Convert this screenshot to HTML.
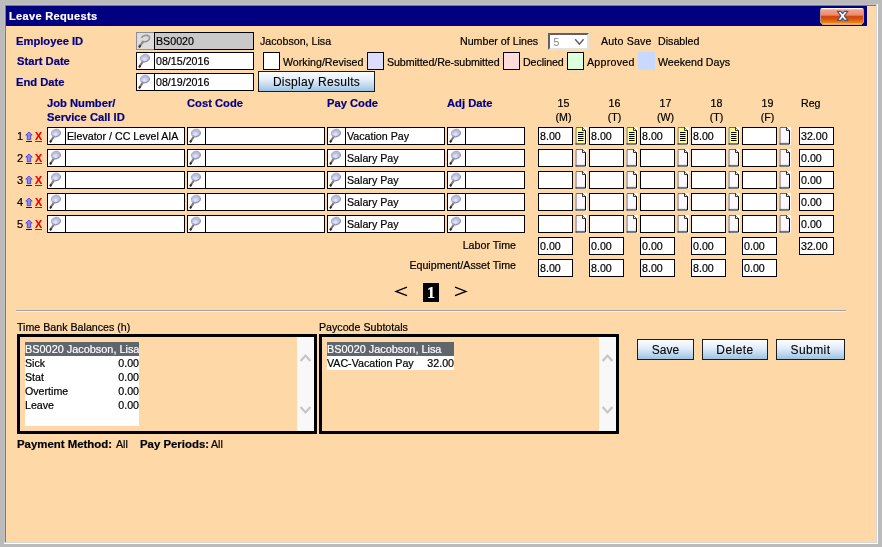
<!DOCTYPE html>
<html><head><meta charset="utf-8"><title>Leave Requests</title>
<style>

html,body{margin:0;padding:0;}
body{width:882px;height:547px;overflow:hidden;background:#bbbbbb;font-family:"Liberation Sans",sans-serif;font-size:10.67px;color:#000;position:relative;-webkit-text-stroke:0.2px;}
.nv,.b,b{font-size:11.2px}
.a{position:absolute;white-space:nowrap;line-height:14px;}
.b{font-weight:bold;}
.nv{color:#000080;font-weight:bold;}
.box{position:absolute;box-sizing:border-box;border:1px solid #000;background:#fff;height:18px;}
.txt{position:absolute;left:1px;top:1px;line-height:14px;white-space:nowrap;}
.grp .txt{left:19px;}
.grp .sep{position:absolute;left:17px;top:0;width:1px;height:16px;background:#000;}
.mag{position:absolute;left:0;top:0;width:17px;height:16px;}
.note{position:absolute;width:12px;height:18px;}
.btn{position:absolute;box-sizing:border-box;border:1px solid #1c1c1c;background:linear-gradient(#fbfdff 0%,#e4eefa 40%,#c2daf0 70%,#9cc3e6 100%);text-align:center;font-size:12px;color:#000;-webkit-text-stroke:0.1px;}
.lg{position:absolute;box-sizing:border-box;border:1px solid #000;width:17px;height:18px;top:52px;}
.lnk{position:absolute;white-space:nowrap;line-height:14px;font-weight:bold;text-decoration:underline;}
.c{position:absolute;white-space:nowrap;line-height:14px;text-align:center;width:51px;}
.lb{position:absolute;box-sizing:border-box;border:3px solid #000;height:100px;top:334px;}
.tb{position:absolute;background:#fff;}
.tb .h{position:absolute;left:0;top:0;height:14px;background:#61666c;color:#fff;overflow:hidden;font-size:10.9px;}
.tb div{position:absolute;left:0;white-space:nowrap;line-height:14px;height:14px;}
.sb{position:absolute;background:#f8f8f8;width:17px;}

</style></head><body><div id="wrap" style="position:absolute;left:0;top:0;width:882px;height:547px;will-change:transform">
<div style="position:absolute;left:4px;top:4px;width:874px;height:540px;background:#fff"></div>
<div style="position:absolute;left:4px;top:4px;width:873px;height:539px;background:#d8d8d8"></div>
<div style="position:absolute;left:4px;top:4px;width:872px;height:538px;background:#c2c2c2"></div>
<div style="position:absolute;left:5px;top:5px;width:871px;height:537px;background:#7c7c7c"></div>
<div style="position:absolute;left:6px;top:6px;width:870px;height:536px;background:#FFD8A8"></div>
<div style="position:absolute;left:6px;top:6px;width:861px;height:20px;background:#000080"></div>
<div class="a b" id="title" style="left:9px;top:9px;color:#fff;font-size:11px;letter-spacing:0.33px">Leave Requests</div>
<div style="position:absolute;left:820px;top:8px;width:44px;height:17px;overflow:hidden">
<svg width="44" height="17" viewBox="0 0 44 17" style="position:absolute;left:0;top:0"><defs><linearGradient id="cg" x1="0" y1="0" x2="0" y2="1"><stop offset="0" stop-color="#f6a994"/><stop offset="0.42" stop-color="#ee8a6c"/><stop offset="0.47" stop-color="#c9481c"/><stop offset="0.62" stop-color="#d94c0c"/><stop offset="0.85" stop-color="#ec7a10"/><stop offset="1" stop-color="#f09a28"/></linearGradient></defs>
<path d="M0.5 1.5 Q0.5 0.5 1.5 0.5 L42.5 0.5 Q43.5 0.5 43.5 1.5 L43.5 14.5 L41.5 16.5 L2.5 16.5 L0.5 14.5 Z" fill="url(#cg)" stroke="#b89890" stroke-width="1"/>
<path d="M1.5 0.7 H42.5" stroke="#ffffff" stroke-width="1.2"/><path d="M2.5 16 H41.5" stroke="#f2c46c" stroke-width="1"/>
<path d="M17.4 3.3 L20.9 3.3 L22.6 5.6 L24.3 3.3 L27.8 3.3 L24.4 7.8 L27.9 12.4 L24.3 12.4 L22.6 10.1 L20.9 12.4 L17.3 12.4 L20.8 7.8 Z" fill="#fbfbfb" stroke="#55556e" stroke-width="1.2" stroke-linejoin="round"/></svg></div>
<div class="a nv" style="left:16px;top:34px">Employee ID</div>
<div class="a nv" style="left:17px;top:54px">Start Date</div>
<div class="a nv" style="left:16px;top:75px">End Date</div>
<div style="position:absolute;left:136px;top:32px;width:18px;height:18px;box-sizing:border-box;border:1px solid #8a8e96;border-right:none;background:#dddddd"><svg class="mag" viewBox="0 0 17 16"><path d="M5.9 8.8 L2.6 13.4" stroke="#8c8c8c" stroke-width="2.3" stroke-linecap="round"/><path d="M3 12.9 L2.5 13.6" stroke="#3a3a3a" stroke-width="2.2" stroke-linecap="round"/><path d="M4.4 5 Q6.5 1.6 10.6 2.3 Q13.6 3.4 12.2 6.4 Q10.4 9.4 6 8.6" stroke="#8e8e8e" stroke-width="1.4" fill="none"/><path d="M6 3.4 Q8.6 1.8 12 3.6 M12.3 3 L12 6.2" stroke="#a4a4a4" stroke-width="0.9" fill="none"/></svg></div>
<div class="box" style="left:154px;top:32px;width:100px;background:#c9c9c9"><div class="txt" style="left:1px">BS0020</div></div>
<div class="box grp" style="left:136px;top:52px;width:118px;"><svg class="mag" viewBox="0 0 17 16"><defs><radialGradient id="lg" cx="42%" cy="62%" r="62%"><stop offset="0" stop-color="#ebebfc"/><stop offset="0.55" stop-color="#c3c5e4"/><stop offset="1" stop-color="#a3a6c4"/></radialGradient></defs><path d="M5.8 8.6 L2.6 13.3" stroke="#85776f" stroke-width="2.1" stroke-linecap="round"/><path d="M2.9 13.1 L2.5 13.6" stroke="#33262a" stroke-width="2" stroke-linecap="round"/><ellipse cx="7.9" cy="5.1" rx="4.7" ry="3.9" fill="url(#lg)" stroke="#a6a9c6" stroke-width="0.8" transform="rotate(-18 7.9 5.1)"/><path d="M4.6 7.6 Q7.4 10 11 7.6 Q12.6 6.2 12.4 4.4" stroke="#82869e" stroke-width="0.9" fill="none" opacity="0.85"/><path d="M4.4 3.9 Q7.2 1.5 11 2.7" stroke="#b9bbdc" stroke-width="1.1" fill="none"/></svg><div class="sep"></div><div class="txt">08/15/2016</div></div>
<div class="box grp" style="left:136px;top:73px;width:118px;"><svg class="mag" viewBox="0 0 17 16"><path d="M5.8 8.6 L2.6 13.3" stroke="#85776f" stroke-width="2.1" stroke-linecap="round"/><path d="M2.9 13.1 L2.5 13.6" stroke="#33262a" stroke-width="2" stroke-linecap="round"/><ellipse cx="7.9" cy="5.1" rx="4.7" ry="3.9" fill="url(#lg)" stroke="#a6a9c6" stroke-width="0.8" transform="rotate(-18 7.9 5.1)"/><path d="M4.6 7.6 Q7.4 10 11 7.6 Q12.6 6.2 12.4 4.4" stroke="#82869e" stroke-width="0.9" fill="none" opacity="0.85"/><path d="M4.4 3.9 Q7.2 1.5 11 2.7" stroke="#b9bbdc" stroke-width="1.1" fill="none"/></svg><div class="sep"></div><div class="txt">08/19/2016</div></div>
<div class="a" style="left:260px;top:34px">Jacobson, Lisa</div>
<div class="a" style="left:460px;top:34px">Number of Lines</div>
<div style="position:absolute;left:548px;top:33px;width:41px;height:17px;box-sizing:border-box;border:2px solid;border-color:#5e6266 #e2e2e2 #e2e2e2 #5e6266;background:#fff"><div class="a" style="left:3.5px;top:1px;color:#878787;font-size:10.4px;line-height:13px;-webkit-text-stroke:0">5</div><svg width="11" height="8" viewBox="0 0 11 8" style="position:absolute;left:24px;top:3px"><path d="M1.2 1.2 L5.4 6.2 L9.6 1.2" stroke="#5c5c5c" stroke-width="1.4" fill="none"/></svg></div>
<div class="a" style="left:601px;top:34px;letter-spacing:0.15px">Auto Save</div>
<div class="a" style="left:658px;top:34px">Disabled</div>
<div class="lg" style="left:263px;background:#fff"></div>
<div class="a" style="left:283px;top:55px">Working/Revised</div>
<div class="lg" style="left:367px;background:#dcdcff"></div>
<div class="a" style="left:387px;top:55px;letter-spacing:-0.08px">Submitted/Re-submitted</div>
<div class="lg" style="left:503px;background:#ffdcdc"></div>
<div class="a" style="left:523px;top:55px;letter-spacing:-0.1px">Declined</div>
<div class="lg" style="left:567px;background:#dcffdc"></div>
<div class="a" style="left:587px;top:55px;letter-spacing:0.25px">Approved</div>
<div class="lg" style="left:638px;background:#c8d8ff;border:none"></div>
<div class="a" style="left:658px;top:55px">Weekend Days</div>
<div class="btn" style="left:258px;top:71px;width:117px;height:21px;line-height:20px;letter-spacing:0.3px">Display Results</div>
<div class="a nv" style="left:47px;top:96px">Job Number/</div>
<div class="a nv" style="left:47px;top:110px">Service Call ID</div>
<div class="a nv" style="left:187px;top:96px">Cost Code</div>
<div class="a nv" style="left:327px;top:96px">Pay Code</div>
<div class="a nv" style="left:447px;top:96px">Adj Date</div>
<div class="c" style="left:538px;top:96px">15</div>
<div class="c" style="left:538px;top:110px">(M)</div>
<div class="c" style="left:589px;top:96px">16</div>
<div class="c" style="left:589px;top:110px">(T)</div>
<div class="c" style="left:640px;top:96px">17</div>
<div class="c" style="left:640px;top:110px">(W)</div>
<div class="c" style="left:691px;top:96px">18</div>
<div class="c" style="left:691px;top:110px">(T)</div>
<div class="c" style="left:742px;top:96px">19</div>
<div class="c" style="left:742px;top:110px">(F)</div>
<div class="a" style="left:801px;top:96px">Reg</div>
<div class="a" style="left:17px;top:129px;font-size:11px">1</div>
<svg style="position:absolute;left:25px;top:131px" width="8" height="12" viewBox="0 0 8 12"><path d="M4 1 L7.2 4 L5.7 4 L5.7 8.7 L2.3 8.7 L2.3 4 L0.8 4 Z" fill="#8c8ce8" stroke="#3434f4" stroke-width="0.8" stroke-linejoin="miter"/><rect x="1" y="10" width="6" height="1" fill="#0000ff"/></svg>
<div class="lnk" style="left:35px;top:129px;color:#ee0000">X</div>
<div class="box grp" style="left:47px;top:127px;width:138px;"><svg class="mag" viewBox="0 0 17 16"><path d="M5.8 8.6 L2.6 13.3" stroke="#85776f" stroke-width="2.1" stroke-linecap="round"/><path d="M2.9 13.1 L2.5 13.6" stroke="#33262a" stroke-width="2" stroke-linecap="round"/><ellipse cx="7.9" cy="5.1" rx="4.7" ry="3.9" fill="url(#lg)" stroke="#a6a9c6" stroke-width="0.8" transform="rotate(-18 7.9 5.1)"/><path d="M4.6 7.6 Q7.4 10 11 7.6 Q12.6 6.2 12.4 4.4" stroke="#82869e" stroke-width="0.9" fill="none" opacity="0.85"/><path d="M4.4 3.9 Q7.2 1.5 11 2.7" stroke="#b9bbdc" stroke-width="1.1" fill="none"/></svg><div class="sep"></div><div class="txt">Elevator / CC Level AIA</div></div>
<div class="box grp" style="left:187px;top:127px;width:138px;"><svg class="mag" viewBox="0 0 17 16"><path d="M5.8 8.6 L2.6 13.3" stroke="#85776f" stroke-width="2.1" stroke-linecap="round"/><path d="M2.9 13.1 L2.5 13.6" stroke="#33262a" stroke-width="2" stroke-linecap="round"/><ellipse cx="7.9" cy="5.1" rx="4.7" ry="3.9" fill="url(#lg)" stroke="#a6a9c6" stroke-width="0.8" transform="rotate(-18 7.9 5.1)"/><path d="M4.6 7.6 Q7.4 10 11 7.6 Q12.6 6.2 12.4 4.4" stroke="#82869e" stroke-width="0.9" fill="none" opacity="0.85"/><path d="M4.4 3.9 Q7.2 1.5 11 2.7" stroke="#b9bbdc" stroke-width="1.1" fill="none"/></svg><div class="sep"></div><div class="txt"></div></div>
<div class="box grp" style="left:327px;top:127px;width:118px;"><svg class="mag" viewBox="0 0 17 16"><path d="M5.8 8.6 L2.6 13.3" stroke="#85776f" stroke-width="2.1" stroke-linecap="round"/><path d="M2.9 13.1 L2.5 13.6" stroke="#33262a" stroke-width="2" stroke-linecap="round"/><ellipse cx="7.9" cy="5.1" rx="4.7" ry="3.9" fill="url(#lg)" stroke="#a6a9c6" stroke-width="0.8" transform="rotate(-18 7.9 5.1)"/><path d="M4.6 7.6 Q7.4 10 11 7.6 Q12.6 6.2 12.4 4.4" stroke="#82869e" stroke-width="0.9" fill="none" opacity="0.85"/><path d="M4.4 3.9 Q7.2 1.5 11 2.7" stroke="#b9bbdc" stroke-width="1.1" fill="none"/></svg><div class="sep"></div><div class="txt">Vacation Pay</div></div>
<div class="box grp" style="left:447px;top:127px;width:78px;"><svg class="mag" viewBox="0 0 17 16"><path d="M5.8 8.6 L2.6 13.3" stroke="#85776f" stroke-width="2.1" stroke-linecap="round"/><path d="M2.9 13.1 L2.5 13.6" stroke="#33262a" stroke-width="2" stroke-linecap="round"/><ellipse cx="7.9" cy="5.1" rx="4.7" ry="3.9" fill="url(#lg)" stroke="#a6a9c6" stroke-width="0.8" transform="rotate(-18 7.9 5.1)"/><path d="M4.6 7.6 Q7.4 10 11 7.6 Q12.6 6.2 12.4 4.4" stroke="#82869e" stroke-width="0.9" fill="none" opacity="0.85"/><path d="M4.4 3.9 Q7.2 1.5 11 2.7" stroke="#b9bbdc" stroke-width="1.1" fill="none"/></svg><div class="sep"></div><div class="txt"></div></div>
<div class="box" style="left:538px;top:127px;width:35px"><div class="txt">8.00</div></div>
<svg class="note" viewBox="0 0 12 18" style="left:575px;top:127px"><rect width="12" height="18" fill="#fdfbf4"/><path d="M1 0.5 L8 0.5 L10.5 3 L10.5 17 L1 17 Z" fill="#ffff8c"/><path d="M1 17.5 L1 0.5 L7.5 0.5" stroke="#6a6a6a" stroke-width="1" fill="none"/><path d="M7.5 0.5 L10.5 3.5 L10.5 17 L0.5 17" stroke="#000" stroke-width="1" fill="none"/><path d="M7.5 0.5 L7.5 3.5 L10.5 3.5" stroke="#000" stroke-width="0.8" fill="#fff"/><path d="M3 5.5 H8.5 M3 7.5 H8.5 M3 9.5 H8.5 M3 11.5 H8.5 M3 13.5 H8.5" stroke="#000" stroke-width="1"/></svg>
<div class="box" style="left:589px;top:127px;width:35px"><div class="txt">8.00</div></div>
<svg class="note" viewBox="0 0 12 18" style="left:626px;top:127px"><rect width="12" height="18" fill="#fdfbf4"/><path d="M1 0.5 L8 0.5 L10.5 3 L10.5 17 L1 17 Z" fill="#ffff8c"/><path d="M1 17.5 L1 0.5 L7.5 0.5" stroke="#6a6a6a" stroke-width="1" fill="none"/><path d="M7.5 0.5 L10.5 3.5 L10.5 17 L0.5 17" stroke="#000" stroke-width="1" fill="none"/><path d="M7.5 0.5 L7.5 3.5 L10.5 3.5" stroke="#000" stroke-width="0.8" fill="#fff"/><path d="M3 5.5 H8.5 M3 7.5 H8.5 M3 9.5 H8.5 M3 11.5 H8.5 M3 13.5 H8.5" stroke="#000" stroke-width="1"/></svg>
<div class="box" style="left:640px;top:127px;width:35px"><div class="txt">8.00</div></div>
<svg class="note" viewBox="0 0 12 18" style="left:677px;top:127px"><rect width="12" height="18" fill="#fdfbf4"/><path d="M1 0.5 L8 0.5 L10.5 3 L10.5 17 L1 17 Z" fill="#ffff8c"/><path d="M1 17.5 L1 0.5 L7.5 0.5" stroke="#6a6a6a" stroke-width="1" fill="none"/><path d="M7.5 0.5 L10.5 3.5 L10.5 17 L0.5 17" stroke="#000" stroke-width="1" fill="none"/><path d="M7.5 0.5 L7.5 3.5 L10.5 3.5" stroke="#000" stroke-width="0.8" fill="#fff"/><path d="M3 5.5 H8.5 M3 7.5 H8.5 M3 9.5 H8.5 M3 11.5 H8.5 M3 13.5 H8.5" stroke="#000" stroke-width="1"/></svg>
<div class="box" style="left:691px;top:127px;width:35px"><div class="txt">8.00</div></div>
<svg class="note" viewBox="0 0 12 18" style="left:728px;top:127px"><rect width="12" height="18" fill="#fdfbf4"/><path d="M1 0.5 L8 0.5 L10.5 3 L10.5 17 L1 17 Z" fill="#ffff8c"/><path d="M1 17.5 L1 0.5 L7.5 0.5" stroke="#6a6a6a" stroke-width="1" fill="none"/><path d="M7.5 0.5 L10.5 3.5 L10.5 17 L0.5 17" stroke="#000" stroke-width="1" fill="none"/><path d="M7.5 0.5 L7.5 3.5 L10.5 3.5" stroke="#000" stroke-width="0.8" fill="#fff"/><path d="M3 5.5 H8.5 M3 7.5 H8.5 M3 9.5 H8.5 M3 11.5 H8.5 M3 13.5 H8.5" stroke="#000" stroke-width="1"/></svg>
<div class="box" style="left:742px;top:127px;width:35px"><div class="txt"></div></div>
<svg class="note" viewBox="0 0 12 18" style="left:779px;top:127px"><rect width="12" height="18" fill="#fdfbfb"/><path d="M1 0.5 L8 0.5 L10.5 3 L10.5 17 L1 17 Z" fill="#fbf7fa"/><path d="M2 16 H10 V12" stroke="#d8d8d8" stroke-width="1" fill="none"/><path d="M1 17.5 L1 0.5 L7.5 0.5" stroke="#6a6a6a" stroke-width="1" fill="none"/><path d="M7.5 0.5 L10.5 3.5 L10.5 17 L0.5 17" stroke="#000" stroke-width="1" fill="none"/><path d="M7.5 0.5 L7.5 3.5 L10.5 3.5" stroke="#000" stroke-width="0.8" fill="#fff"/></svg>
<div class="box" style="left:799px;top:127px;width:35px"><div class="txt">32.00</div></div>
<div class="a" style="left:17px;top:151px;font-size:11px">2</div>
<svg style="position:absolute;left:25px;top:153px" width="8" height="12" viewBox="0 0 8 12"><path d="M4 1 L7.2 4 L5.7 4 L5.7 8.7 L2.3 8.7 L2.3 4 L0.8 4 Z" fill="#8c8ce8" stroke="#3434f4" stroke-width="0.8" stroke-linejoin="miter"/><rect x="1" y="10" width="6" height="1" fill="#0000ff"/></svg>
<div class="lnk" style="left:35px;top:151px;color:#ee0000">X</div>
<div class="box grp" style="left:47px;top:149px;width:138px;"><svg class="mag" viewBox="0 0 17 16"><path d="M5.8 8.6 L2.6 13.3" stroke="#85776f" stroke-width="2.1" stroke-linecap="round"/><path d="M2.9 13.1 L2.5 13.6" stroke="#33262a" stroke-width="2" stroke-linecap="round"/><ellipse cx="7.9" cy="5.1" rx="4.7" ry="3.9" fill="url(#lg)" stroke="#a6a9c6" stroke-width="0.8" transform="rotate(-18 7.9 5.1)"/><path d="M4.6 7.6 Q7.4 10 11 7.6 Q12.6 6.2 12.4 4.4" stroke="#82869e" stroke-width="0.9" fill="none" opacity="0.85"/><path d="M4.4 3.9 Q7.2 1.5 11 2.7" stroke="#b9bbdc" stroke-width="1.1" fill="none"/></svg><div class="sep"></div><div class="txt"></div></div>
<div class="box grp" style="left:187px;top:149px;width:138px;"><svg class="mag" viewBox="0 0 17 16"><path d="M5.8 8.6 L2.6 13.3" stroke="#85776f" stroke-width="2.1" stroke-linecap="round"/><path d="M2.9 13.1 L2.5 13.6" stroke="#33262a" stroke-width="2" stroke-linecap="round"/><ellipse cx="7.9" cy="5.1" rx="4.7" ry="3.9" fill="url(#lg)" stroke="#a6a9c6" stroke-width="0.8" transform="rotate(-18 7.9 5.1)"/><path d="M4.6 7.6 Q7.4 10 11 7.6 Q12.6 6.2 12.4 4.4" stroke="#82869e" stroke-width="0.9" fill="none" opacity="0.85"/><path d="M4.4 3.9 Q7.2 1.5 11 2.7" stroke="#b9bbdc" stroke-width="1.1" fill="none"/></svg><div class="sep"></div><div class="txt"></div></div>
<div class="box grp" style="left:327px;top:149px;width:118px;"><svg class="mag" viewBox="0 0 17 16"><path d="M5.8 8.6 L2.6 13.3" stroke="#85776f" stroke-width="2.1" stroke-linecap="round"/><path d="M2.9 13.1 L2.5 13.6" stroke="#33262a" stroke-width="2" stroke-linecap="round"/><ellipse cx="7.9" cy="5.1" rx="4.7" ry="3.9" fill="url(#lg)" stroke="#a6a9c6" stroke-width="0.8" transform="rotate(-18 7.9 5.1)"/><path d="M4.6 7.6 Q7.4 10 11 7.6 Q12.6 6.2 12.4 4.4" stroke="#82869e" stroke-width="0.9" fill="none" opacity="0.85"/><path d="M4.4 3.9 Q7.2 1.5 11 2.7" stroke="#b9bbdc" stroke-width="1.1" fill="none"/></svg><div class="sep"></div><div class="txt">Salary Pay</div></div>
<div class="box grp" style="left:447px;top:149px;width:78px;"><svg class="mag" viewBox="0 0 17 16"><path d="M5.8 8.6 L2.6 13.3" stroke="#85776f" stroke-width="2.1" stroke-linecap="round"/><path d="M2.9 13.1 L2.5 13.6" stroke="#33262a" stroke-width="2" stroke-linecap="round"/><ellipse cx="7.9" cy="5.1" rx="4.7" ry="3.9" fill="url(#lg)" stroke="#a6a9c6" stroke-width="0.8" transform="rotate(-18 7.9 5.1)"/><path d="M4.6 7.6 Q7.4 10 11 7.6 Q12.6 6.2 12.4 4.4" stroke="#82869e" stroke-width="0.9" fill="none" opacity="0.85"/><path d="M4.4 3.9 Q7.2 1.5 11 2.7" stroke="#b9bbdc" stroke-width="1.1" fill="none"/></svg><div class="sep"></div><div class="txt"></div></div>
<div class="box" style="left:538px;top:149px;width:35px"><div class="txt"></div></div>
<svg class="note" viewBox="0 0 12 18" style="left:575px;top:149px"><rect width="12" height="18" fill="#fdfbfb"/><path d="M1 0.5 L8 0.5 L10.5 3 L10.5 17 L1 17 Z" fill="#fbf7fa"/><path d="M2 16 H10 V12" stroke="#d8d8d8" stroke-width="1" fill="none"/><path d="M1 17.5 L1 0.5 L7.5 0.5" stroke="#6a6a6a" stroke-width="1" fill="none"/><path d="M7.5 0.5 L10.5 3.5 L10.5 17 L0.5 17" stroke="#000" stroke-width="1" fill="none"/><path d="M7.5 0.5 L7.5 3.5 L10.5 3.5" stroke="#000" stroke-width="0.8" fill="#fff"/></svg>
<div class="box" style="left:589px;top:149px;width:35px"><div class="txt"></div></div>
<svg class="note" viewBox="0 0 12 18" style="left:626px;top:149px"><rect width="12" height="18" fill="#fdfbfb"/><path d="M1 0.5 L8 0.5 L10.5 3 L10.5 17 L1 17 Z" fill="#fbf7fa"/><path d="M2 16 H10 V12" stroke="#d8d8d8" stroke-width="1" fill="none"/><path d="M1 17.5 L1 0.5 L7.5 0.5" stroke="#6a6a6a" stroke-width="1" fill="none"/><path d="M7.5 0.5 L10.5 3.5 L10.5 17 L0.5 17" stroke="#000" stroke-width="1" fill="none"/><path d="M7.5 0.5 L7.5 3.5 L10.5 3.5" stroke="#000" stroke-width="0.8" fill="#fff"/></svg>
<div class="box" style="left:640px;top:149px;width:35px"><div class="txt"></div></div>
<svg class="note" viewBox="0 0 12 18" style="left:677px;top:149px"><rect width="12" height="18" fill="#fdfbfb"/><path d="M1 0.5 L8 0.5 L10.5 3 L10.5 17 L1 17 Z" fill="#fbf7fa"/><path d="M2 16 H10 V12" stroke="#d8d8d8" stroke-width="1" fill="none"/><path d="M1 17.5 L1 0.5 L7.5 0.5" stroke="#6a6a6a" stroke-width="1" fill="none"/><path d="M7.5 0.5 L10.5 3.5 L10.5 17 L0.5 17" stroke="#000" stroke-width="1" fill="none"/><path d="M7.5 0.5 L7.5 3.5 L10.5 3.5" stroke="#000" stroke-width="0.8" fill="#fff"/></svg>
<div class="box" style="left:691px;top:149px;width:35px"><div class="txt"></div></div>
<svg class="note" viewBox="0 0 12 18" style="left:728px;top:149px"><rect width="12" height="18" fill="#fdfbfb"/><path d="M1 0.5 L8 0.5 L10.5 3 L10.5 17 L1 17 Z" fill="#fbf7fa"/><path d="M2 16 H10 V12" stroke="#d8d8d8" stroke-width="1" fill="none"/><path d="M1 17.5 L1 0.5 L7.5 0.5" stroke="#6a6a6a" stroke-width="1" fill="none"/><path d="M7.5 0.5 L10.5 3.5 L10.5 17 L0.5 17" stroke="#000" stroke-width="1" fill="none"/><path d="M7.5 0.5 L7.5 3.5 L10.5 3.5" stroke="#000" stroke-width="0.8" fill="#fff"/></svg>
<div class="box" style="left:742px;top:149px;width:35px"><div class="txt"></div></div>
<svg class="note" viewBox="0 0 12 18" style="left:779px;top:149px"><rect width="12" height="18" fill="#fdfbfb"/><path d="M1 0.5 L8 0.5 L10.5 3 L10.5 17 L1 17 Z" fill="#fbf7fa"/><path d="M2 16 H10 V12" stroke="#d8d8d8" stroke-width="1" fill="none"/><path d="M1 17.5 L1 0.5 L7.5 0.5" stroke="#6a6a6a" stroke-width="1" fill="none"/><path d="M7.5 0.5 L10.5 3.5 L10.5 17 L0.5 17" stroke="#000" stroke-width="1" fill="none"/><path d="M7.5 0.5 L7.5 3.5 L10.5 3.5" stroke="#000" stroke-width="0.8" fill="#fff"/></svg>
<div class="box" style="left:799px;top:149px;width:35px"><div class="txt">0.00</div></div>
<div class="a" style="left:17px;top:173px;font-size:11px">3</div>
<svg style="position:absolute;left:25px;top:175px" width="8" height="12" viewBox="0 0 8 12"><path d="M4 1 L7.2 4 L5.7 4 L5.7 8.7 L2.3 8.7 L2.3 4 L0.8 4 Z" fill="#8c8ce8" stroke="#3434f4" stroke-width="0.8" stroke-linejoin="miter"/><rect x="1" y="10" width="6" height="1" fill="#0000ff"/></svg>
<div class="lnk" style="left:35px;top:173px;color:#ee0000">X</div>
<div class="box grp" style="left:47px;top:171px;width:138px;"><svg class="mag" viewBox="0 0 17 16"><path d="M5.8 8.6 L2.6 13.3" stroke="#85776f" stroke-width="2.1" stroke-linecap="round"/><path d="M2.9 13.1 L2.5 13.6" stroke="#33262a" stroke-width="2" stroke-linecap="round"/><ellipse cx="7.9" cy="5.1" rx="4.7" ry="3.9" fill="url(#lg)" stroke="#a6a9c6" stroke-width="0.8" transform="rotate(-18 7.9 5.1)"/><path d="M4.6 7.6 Q7.4 10 11 7.6 Q12.6 6.2 12.4 4.4" stroke="#82869e" stroke-width="0.9" fill="none" opacity="0.85"/><path d="M4.4 3.9 Q7.2 1.5 11 2.7" stroke="#b9bbdc" stroke-width="1.1" fill="none"/></svg><div class="sep"></div><div class="txt"></div></div>
<div class="box grp" style="left:187px;top:171px;width:138px;"><svg class="mag" viewBox="0 0 17 16"><path d="M5.8 8.6 L2.6 13.3" stroke="#85776f" stroke-width="2.1" stroke-linecap="round"/><path d="M2.9 13.1 L2.5 13.6" stroke="#33262a" stroke-width="2" stroke-linecap="round"/><ellipse cx="7.9" cy="5.1" rx="4.7" ry="3.9" fill="url(#lg)" stroke="#a6a9c6" stroke-width="0.8" transform="rotate(-18 7.9 5.1)"/><path d="M4.6 7.6 Q7.4 10 11 7.6 Q12.6 6.2 12.4 4.4" stroke="#82869e" stroke-width="0.9" fill="none" opacity="0.85"/><path d="M4.4 3.9 Q7.2 1.5 11 2.7" stroke="#b9bbdc" stroke-width="1.1" fill="none"/></svg><div class="sep"></div><div class="txt"></div></div>
<div class="box grp" style="left:327px;top:171px;width:118px;"><svg class="mag" viewBox="0 0 17 16"><path d="M5.8 8.6 L2.6 13.3" stroke="#85776f" stroke-width="2.1" stroke-linecap="round"/><path d="M2.9 13.1 L2.5 13.6" stroke="#33262a" stroke-width="2" stroke-linecap="round"/><ellipse cx="7.9" cy="5.1" rx="4.7" ry="3.9" fill="url(#lg)" stroke="#a6a9c6" stroke-width="0.8" transform="rotate(-18 7.9 5.1)"/><path d="M4.6 7.6 Q7.4 10 11 7.6 Q12.6 6.2 12.4 4.4" stroke="#82869e" stroke-width="0.9" fill="none" opacity="0.85"/><path d="M4.4 3.9 Q7.2 1.5 11 2.7" stroke="#b9bbdc" stroke-width="1.1" fill="none"/></svg><div class="sep"></div><div class="txt">Salary Pay</div></div>
<div class="box grp" style="left:447px;top:171px;width:78px;"><svg class="mag" viewBox="0 0 17 16"><path d="M5.8 8.6 L2.6 13.3" stroke="#85776f" stroke-width="2.1" stroke-linecap="round"/><path d="M2.9 13.1 L2.5 13.6" stroke="#33262a" stroke-width="2" stroke-linecap="round"/><ellipse cx="7.9" cy="5.1" rx="4.7" ry="3.9" fill="url(#lg)" stroke="#a6a9c6" stroke-width="0.8" transform="rotate(-18 7.9 5.1)"/><path d="M4.6 7.6 Q7.4 10 11 7.6 Q12.6 6.2 12.4 4.4" stroke="#82869e" stroke-width="0.9" fill="none" opacity="0.85"/><path d="M4.4 3.9 Q7.2 1.5 11 2.7" stroke="#b9bbdc" stroke-width="1.1" fill="none"/></svg><div class="sep"></div><div class="txt"></div></div>
<div class="box" style="left:538px;top:171px;width:35px"><div class="txt"></div></div>
<svg class="note" viewBox="0 0 12 18" style="left:575px;top:171px"><rect width="12" height="18" fill="#fdfbfb"/><path d="M1 0.5 L8 0.5 L10.5 3 L10.5 17 L1 17 Z" fill="#fbf7fa"/><path d="M2 16 H10 V12" stroke="#d8d8d8" stroke-width="1" fill="none"/><path d="M1 17.5 L1 0.5 L7.5 0.5" stroke="#6a6a6a" stroke-width="1" fill="none"/><path d="M7.5 0.5 L10.5 3.5 L10.5 17 L0.5 17" stroke="#000" stroke-width="1" fill="none"/><path d="M7.5 0.5 L7.5 3.5 L10.5 3.5" stroke="#000" stroke-width="0.8" fill="#fff"/></svg>
<div class="box" style="left:589px;top:171px;width:35px"><div class="txt"></div></div>
<svg class="note" viewBox="0 0 12 18" style="left:626px;top:171px"><rect width="12" height="18" fill="#fdfbfb"/><path d="M1 0.5 L8 0.5 L10.5 3 L10.5 17 L1 17 Z" fill="#fbf7fa"/><path d="M2 16 H10 V12" stroke="#d8d8d8" stroke-width="1" fill="none"/><path d="M1 17.5 L1 0.5 L7.5 0.5" stroke="#6a6a6a" stroke-width="1" fill="none"/><path d="M7.5 0.5 L10.5 3.5 L10.5 17 L0.5 17" stroke="#000" stroke-width="1" fill="none"/><path d="M7.5 0.5 L7.5 3.5 L10.5 3.5" stroke="#000" stroke-width="0.8" fill="#fff"/></svg>
<div class="box" style="left:640px;top:171px;width:35px"><div class="txt"></div></div>
<svg class="note" viewBox="0 0 12 18" style="left:677px;top:171px"><rect width="12" height="18" fill="#fdfbfb"/><path d="M1 0.5 L8 0.5 L10.5 3 L10.5 17 L1 17 Z" fill="#fbf7fa"/><path d="M2 16 H10 V12" stroke="#d8d8d8" stroke-width="1" fill="none"/><path d="M1 17.5 L1 0.5 L7.5 0.5" stroke="#6a6a6a" stroke-width="1" fill="none"/><path d="M7.5 0.5 L10.5 3.5 L10.5 17 L0.5 17" stroke="#000" stroke-width="1" fill="none"/><path d="M7.5 0.5 L7.5 3.5 L10.5 3.5" stroke="#000" stroke-width="0.8" fill="#fff"/></svg>
<div class="box" style="left:691px;top:171px;width:35px"><div class="txt"></div></div>
<svg class="note" viewBox="0 0 12 18" style="left:728px;top:171px"><rect width="12" height="18" fill="#fdfbfb"/><path d="M1 0.5 L8 0.5 L10.5 3 L10.5 17 L1 17 Z" fill="#fbf7fa"/><path d="M2 16 H10 V12" stroke="#d8d8d8" stroke-width="1" fill="none"/><path d="M1 17.5 L1 0.5 L7.5 0.5" stroke="#6a6a6a" stroke-width="1" fill="none"/><path d="M7.5 0.5 L10.5 3.5 L10.5 17 L0.5 17" stroke="#000" stroke-width="1" fill="none"/><path d="M7.5 0.5 L7.5 3.5 L10.5 3.5" stroke="#000" stroke-width="0.8" fill="#fff"/></svg>
<div class="box" style="left:742px;top:171px;width:35px"><div class="txt"></div></div>
<svg class="note" viewBox="0 0 12 18" style="left:779px;top:171px"><rect width="12" height="18" fill="#fdfbfb"/><path d="M1 0.5 L8 0.5 L10.5 3 L10.5 17 L1 17 Z" fill="#fbf7fa"/><path d="M2 16 H10 V12" stroke="#d8d8d8" stroke-width="1" fill="none"/><path d="M1 17.5 L1 0.5 L7.5 0.5" stroke="#6a6a6a" stroke-width="1" fill="none"/><path d="M7.5 0.5 L10.5 3.5 L10.5 17 L0.5 17" stroke="#000" stroke-width="1" fill="none"/><path d="M7.5 0.5 L7.5 3.5 L10.5 3.5" stroke="#000" stroke-width="0.8" fill="#fff"/></svg>
<div class="box" style="left:799px;top:171px;width:35px"><div class="txt">0.00</div></div>
<div class="a" style="left:17px;top:195px;font-size:11px">4</div>
<svg style="position:absolute;left:25px;top:197px" width="8" height="12" viewBox="0 0 8 12"><path d="M4 1 L7.2 4 L5.7 4 L5.7 8.7 L2.3 8.7 L2.3 4 L0.8 4 Z" fill="#8c8ce8" stroke="#3434f4" stroke-width="0.8" stroke-linejoin="miter"/><rect x="1" y="10" width="6" height="1" fill="#0000ff"/></svg>
<div class="lnk" style="left:35px;top:195px;color:#ee0000">X</div>
<div class="box grp" style="left:47px;top:193px;width:138px;"><svg class="mag" viewBox="0 0 17 16"><path d="M5.8 8.6 L2.6 13.3" stroke="#85776f" stroke-width="2.1" stroke-linecap="round"/><path d="M2.9 13.1 L2.5 13.6" stroke="#33262a" stroke-width="2" stroke-linecap="round"/><ellipse cx="7.9" cy="5.1" rx="4.7" ry="3.9" fill="url(#lg)" stroke="#a6a9c6" stroke-width="0.8" transform="rotate(-18 7.9 5.1)"/><path d="M4.6 7.6 Q7.4 10 11 7.6 Q12.6 6.2 12.4 4.4" stroke="#82869e" stroke-width="0.9" fill="none" opacity="0.85"/><path d="M4.4 3.9 Q7.2 1.5 11 2.7" stroke="#b9bbdc" stroke-width="1.1" fill="none"/></svg><div class="sep"></div><div class="txt"></div></div>
<div class="box grp" style="left:187px;top:193px;width:138px;"><svg class="mag" viewBox="0 0 17 16"><path d="M5.8 8.6 L2.6 13.3" stroke="#85776f" stroke-width="2.1" stroke-linecap="round"/><path d="M2.9 13.1 L2.5 13.6" stroke="#33262a" stroke-width="2" stroke-linecap="round"/><ellipse cx="7.9" cy="5.1" rx="4.7" ry="3.9" fill="url(#lg)" stroke="#a6a9c6" stroke-width="0.8" transform="rotate(-18 7.9 5.1)"/><path d="M4.6 7.6 Q7.4 10 11 7.6 Q12.6 6.2 12.4 4.4" stroke="#82869e" stroke-width="0.9" fill="none" opacity="0.85"/><path d="M4.4 3.9 Q7.2 1.5 11 2.7" stroke="#b9bbdc" stroke-width="1.1" fill="none"/></svg><div class="sep"></div><div class="txt"></div></div>
<div class="box grp" style="left:327px;top:193px;width:118px;"><svg class="mag" viewBox="0 0 17 16"><path d="M5.8 8.6 L2.6 13.3" stroke="#85776f" stroke-width="2.1" stroke-linecap="round"/><path d="M2.9 13.1 L2.5 13.6" stroke="#33262a" stroke-width="2" stroke-linecap="round"/><ellipse cx="7.9" cy="5.1" rx="4.7" ry="3.9" fill="url(#lg)" stroke="#a6a9c6" stroke-width="0.8" transform="rotate(-18 7.9 5.1)"/><path d="M4.6 7.6 Q7.4 10 11 7.6 Q12.6 6.2 12.4 4.4" stroke="#82869e" stroke-width="0.9" fill="none" opacity="0.85"/><path d="M4.4 3.9 Q7.2 1.5 11 2.7" stroke="#b9bbdc" stroke-width="1.1" fill="none"/></svg><div class="sep"></div><div class="txt">Salary Pay</div></div>
<div class="box grp" style="left:447px;top:193px;width:78px;"><svg class="mag" viewBox="0 0 17 16"><path d="M5.8 8.6 L2.6 13.3" stroke="#85776f" stroke-width="2.1" stroke-linecap="round"/><path d="M2.9 13.1 L2.5 13.6" stroke="#33262a" stroke-width="2" stroke-linecap="round"/><ellipse cx="7.9" cy="5.1" rx="4.7" ry="3.9" fill="url(#lg)" stroke="#a6a9c6" stroke-width="0.8" transform="rotate(-18 7.9 5.1)"/><path d="M4.6 7.6 Q7.4 10 11 7.6 Q12.6 6.2 12.4 4.4" stroke="#82869e" stroke-width="0.9" fill="none" opacity="0.85"/><path d="M4.4 3.9 Q7.2 1.5 11 2.7" stroke="#b9bbdc" stroke-width="1.1" fill="none"/></svg><div class="sep"></div><div class="txt"></div></div>
<div class="box" style="left:538px;top:193px;width:35px"><div class="txt"></div></div>
<svg class="note" viewBox="0 0 12 18" style="left:575px;top:193px"><rect width="12" height="18" fill="#fdfbfb"/><path d="M1 0.5 L8 0.5 L10.5 3 L10.5 17 L1 17 Z" fill="#fbf7fa"/><path d="M2 16 H10 V12" stroke="#d8d8d8" stroke-width="1" fill="none"/><path d="M1 17.5 L1 0.5 L7.5 0.5" stroke="#6a6a6a" stroke-width="1" fill="none"/><path d="M7.5 0.5 L10.5 3.5 L10.5 17 L0.5 17" stroke="#000" stroke-width="1" fill="none"/><path d="M7.5 0.5 L7.5 3.5 L10.5 3.5" stroke="#000" stroke-width="0.8" fill="#fff"/></svg>
<div class="box" style="left:589px;top:193px;width:35px"><div class="txt"></div></div>
<svg class="note" viewBox="0 0 12 18" style="left:626px;top:193px"><rect width="12" height="18" fill="#fdfbfb"/><path d="M1 0.5 L8 0.5 L10.5 3 L10.5 17 L1 17 Z" fill="#fbf7fa"/><path d="M2 16 H10 V12" stroke="#d8d8d8" stroke-width="1" fill="none"/><path d="M1 17.5 L1 0.5 L7.5 0.5" stroke="#6a6a6a" stroke-width="1" fill="none"/><path d="M7.5 0.5 L10.5 3.5 L10.5 17 L0.5 17" stroke="#000" stroke-width="1" fill="none"/><path d="M7.5 0.5 L7.5 3.5 L10.5 3.5" stroke="#000" stroke-width="0.8" fill="#fff"/></svg>
<div class="box" style="left:640px;top:193px;width:35px"><div class="txt"></div></div>
<svg class="note" viewBox="0 0 12 18" style="left:677px;top:193px"><rect width="12" height="18" fill="#fdfbfb"/><path d="M1 0.5 L8 0.5 L10.5 3 L10.5 17 L1 17 Z" fill="#fbf7fa"/><path d="M2 16 H10 V12" stroke="#d8d8d8" stroke-width="1" fill="none"/><path d="M1 17.5 L1 0.5 L7.5 0.5" stroke="#6a6a6a" stroke-width="1" fill="none"/><path d="M7.5 0.5 L10.5 3.5 L10.5 17 L0.5 17" stroke="#000" stroke-width="1" fill="none"/><path d="M7.5 0.5 L7.5 3.5 L10.5 3.5" stroke="#000" stroke-width="0.8" fill="#fff"/></svg>
<div class="box" style="left:691px;top:193px;width:35px"><div class="txt"></div></div>
<svg class="note" viewBox="0 0 12 18" style="left:728px;top:193px"><rect width="12" height="18" fill="#fdfbfb"/><path d="M1 0.5 L8 0.5 L10.5 3 L10.5 17 L1 17 Z" fill="#fbf7fa"/><path d="M2 16 H10 V12" stroke="#d8d8d8" stroke-width="1" fill="none"/><path d="M1 17.5 L1 0.5 L7.5 0.5" stroke="#6a6a6a" stroke-width="1" fill="none"/><path d="M7.5 0.5 L10.5 3.5 L10.5 17 L0.5 17" stroke="#000" stroke-width="1" fill="none"/><path d="M7.5 0.5 L7.5 3.5 L10.5 3.5" stroke="#000" stroke-width="0.8" fill="#fff"/></svg>
<div class="box" style="left:742px;top:193px;width:35px"><div class="txt"></div></div>
<svg class="note" viewBox="0 0 12 18" style="left:779px;top:193px"><rect width="12" height="18" fill="#fdfbfb"/><path d="M1 0.5 L8 0.5 L10.5 3 L10.5 17 L1 17 Z" fill="#fbf7fa"/><path d="M2 16 H10 V12" stroke="#d8d8d8" stroke-width="1" fill="none"/><path d="M1 17.5 L1 0.5 L7.5 0.5" stroke="#6a6a6a" stroke-width="1" fill="none"/><path d="M7.5 0.5 L10.5 3.5 L10.5 17 L0.5 17" stroke="#000" stroke-width="1" fill="none"/><path d="M7.5 0.5 L7.5 3.5 L10.5 3.5" stroke="#000" stroke-width="0.8" fill="#fff"/></svg>
<div class="box" style="left:799px;top:193px;width:35px"><div class="txt">0.00</div></div>
<div class="a" style="left:17px;top:217px;font-size:11px">5</div>
<svg style="position:absolute;left:25px;top:219px" width="8" height="12" viewBox="0 0 8 12"><path d="M4 1 L7.2 4 L5.7 4 L5.7 8.7 L2.3 8.7 L2.3 4 L0.8 4 Z" fill="#8c8ce8" stroke="#3434f4" stroke-width="0.8" stroke-linejoin="miter"/><rect x="1" y="10" width="6" height="1" fill="#0000ff"/></svg>
<div class="lnk" style="left:35px;top:217px;color:#ee0000">X</div>
<div class="box grp" style="left:47px;top:215px;width:138px;"><svg class="mag" viewBox="0 0 17 16"><path d="M5.8 8.6 L2.6 13.3" stroke="#85776f" stroke-width="2.1" stroke-linecap="round"/><path d="M2.9 13.1 L2.5 13.6" stroke="#33262a" stroke-width="2" stroke-linecap="round"/><ellipse cx="7.9" cy="5.1" rx="4.7" ry="3.9" fill="url(#lg)" stroke="#a6a9c6" stroke-width="0.8" transform="rotate(-18 7.9 5.1)"/><path d="M4.6 7.6 Q7.4 10 11 7.6 Q12.6 6.2 12.4 4.4" stroke="#82869e" stroke-width="0.9" fill="none" opacity="0.85"/><path d="M4.4 3.9 Q7.2 1.5 11 2.7" stroke="#b9bbdc" stroke-width="1.1" fill="none"/></svg><div class="sep"></div><div class="txt"></div></div>
<div class="box grp" style="left:187px;top:215px;width:138px;"><svg class="mag" viewBox="0 0 17 16"><path d="M5.8 8.6 L2.6 13.3" stroke="#85776f" stroke-width="2.1" stroke-linecap="round"/><path d="M2.9 13.1 L2.5 13.6" stroke="#33262a" stroke-width="2" stroke-linecap="round"/><ellipse cx="7.9" cy="5.1" rx="4.7" ry="3.9" fill="url(#lg)" stroke="#a6a9c6" stroke-width="0.8" transform="rotate(-18 7.9 5.1)"/><path d="M4.6 7.6 Q7.4 10 11 7.6 Q12.6 6.2 12.4 4.4" stroke="#82869e" stroke-width="0.9" fill="none" opacity="0.85"/><path d="M4.4 3.9 Q7.2 1.5 11 2.7" stroke="#b9bbdc" stroke-width="1.1" fill="none"/></svg><div class="sep"></div><div class="txt"></div></div>
<div class="box grp" style="left:327px;top:215px;width:118px;"><svg class="mag" viewBox="0 0 17 16"><path d="M5.8 8.6 L2.6 13.3" stroke="#85776f" stroke-width="2.1" stroke-linecap="round"/><path d="M2.9 13.1 L2.5 13.6" stroke="#33262a" stroke-width="2" stroke-linecap="round"/><ellipse cx="7.9" cy="5.1" rx="4.7" ry="3.9" fill="url(#lg)" stroke="#a6a9c6" stroke-width="0.8" transform="rotate(-18 7.9 5.1)"/><path d="M4.6 7.6 Q7.4 10 11 7.6 Q12.6 6.2 12.4 4.4" stroke="#82869e" stroke-width="0.9" fill="none" opacity="0.85"/><path d="M4.4 3.9 Q7.2 1.5 11 2.7" stroke="#b9bbdc" stroke-width="1.1" fill="none"/></svg><div class="sep"></div><div class="txt">Salary Pay</div></div>
<div class="box grp" style="left:447px;top:215px;width:78px;"><svg class="mag" viewBox="0 0 17 16"><path d="M5.8 8.6 L2.6 13.3" stroke="#85776f" stroke-width="2.1" stroke-linecap="round"/><path d="M2.9 13.1 L2.5 13.6" stroke="#33262a" stroke-width="2" stroke-linecap="round"/><ellipse cx="7.9" cy="5.1" rx="4.7" ry="3.9" fill="url(#lg)" stroke="#a6a9c6" stroke-width="0.8" transform="rotate(-18 7.9 5.1)"/><path d="M4.6 7.6 Q7.4 10 11 7.6 Q12.6 6.2 12.4 4.4" stroke="#82869e" stroke-width="0.9" fill="none" opacity="0.85"/><path d="M4.4 3.9 Q7.2 1.5 11 2.7" stroke="#b9bbdc" stroke-width="1.1" fill="none"/></svg><div class="sep"></div><div class="txt"></div></div>
<div class="box" style="left:538px;top:215px;width:35px"><div class="txt"></div></div>
<svg class="note" viewBox="0 0 12 18" style="left:575px;top:215px"><rect width="12" height="18" fill="#fdfbfb"/><path d="M1 0.5 L8 0.5 L10.5 3 L10.5 17 L1 17 Z" fill="#fbf7fa"/><path d="M2 16 H10 V12" stroke="#d8d8d8" stroke-width="1" fill="none"/><path d="M1 17.5 L1 0.5 L7.5 0.5" stroke="#6a6a6a" stroke-width="1" fill="none"/><path d="M7.5 0.5 L10.5 3.5 L10.5 17 L0.5 17" stroke="#000" stroke-width="1" fill="none"/><path d="M7.5 0.5 L7.5 3.5 L10.5 3.5" stroke="#000" stroke-width="0.8" fill="#fff"/></svg>
<div class="box" style="left:589px;top:215px;width:35px"><div class="txt"></div></div>
<svg class="note" viewBox="0 0 12 18" style="left:626px;top:215px"><rect width="12" height="18" fill="#fdfbfb"/><path d="M1 0.5 L8 0.5 L10.5 3 L10.5 17 L1 17 Z" fill="#fbf7fa"/><path d="M2 16 H10 V12" stroke="#d8d8d8" stroke-width="1" fill="none"/><path d="M1 17.5 L1 0.5 L7.5 0.5" stroke="#6a6a6a" stroke-width="1" fill="none"/><path d="M7.5 0.5 L10.5 3.5 L10.5 17 L0.5 17" stroke="#000" stroke-width="1" fill="none"/><path d="M7.5 0.5 L7.5 3.5 L10.5 3.5" stroke="#000" stroke-width="0.8" fill="#fff"/></svg>
<div class="box" style="left:640px;top:215px;width:35px"><div class="txt"></div></div>
<svg class="note" viewBox="0 0 12 18" style="left:677px;top:215px"><rect width="12" height="18" fill="#fdfbfb"/><path d="M1 0.5 L8 0.5 L10.5 3 L10.5 17 L1 17 Z" fill="#fbf7fa"/><path d="M2 16 H10 V12" stroke="#d8d8d8" stroke-width="1" fill="none"/><path d="M1 17.5 L1 0.5 L7.5 0.5" stroke="#6a6a6a" stroke-width="1" fill="none"/><path d="M7.5 0.5 L10.5 3.5 L10.5 17 L0.5 17" stroke="#000" stroke-width="1" fill="none"/><path d="M7.5 0.5 L7.5 3.5 L10.5 3.5" stroke="#000" stroke-width="0.8" fill="#fff"/></svg>
<div class="box" style="left:691px;top:215px;width:35px"><div class="txt"></div></div>
<svg class="note" viewBox="0 0 12 18" style="left:728px;top:215px"><rect width="12" height="18" fill="#fdfbfb"/><path d="M1 0.5 L8 0.5 L10.5 3 L10.5 17 L1 17 Z" fill="#fbf7fa"/><path d="M2 16 H10 V12" stroke="#d8d8d8" stroke-width="1" fill="none"/><path d="M1 17.5 L1 0.5 L7.5 0.5" stroke="#6a6a6a" stroke-width="1" fill="none"/><path d="M7.5 0.5 L10.5 3.5 L10.5 17 L0.5 17" stroke="#000" stroke-width="1" fill="none"/><path d="M7.5 0.5 L7.5 3.5 L10.5 3.5" stroke="#000" stroke-width="0.8" fill="#fff"/></svg>
<div class="box" style="left:742px;top:215px;width:35px"><div class="txt"></div></div>
<svg class="note" viewBox="0 0 12 18" style="left:779px;top:215px"><rect width="12" height="18" fill="#fdfbfb"/><path d="M1 0.5 L8 0.5 L10.5 3 L10.5 17 L1 17 Z" fill="#fbf7fa"/><path d="M2 16 H10 V12" stroke="#d8d8d8" stroke-width="1" fill="none"/><path d="M1 17.5 L1 0.5 L7.5 0.5" stroke="#6a6a6a" stroke-width="1" fill="none"/><path d="M7.5 0.5 L10.5 3.5 L10.5 17 L0.5 17" stroke="#000" stroke-width="1" fill="none"/><path d="M7.5 0.5 L7.5 3.5 L10.5 3.5" stroke="#000" stroke-width="0.8" fill="#fff"/></svg>
<div class="box" style="left:799px;top:215px;width:35px"><div class="txt">0.00</div></div>
<div class="a" style="left:380px;width:136px;text-align:right;top:238px">Labor Time</div>
<div class="a" style="left:380px;width:136px;text-align:right;top:258px">Equipment/Asset Time</div>
<div class="box" style="left:538px;top:237px;width:35px"><div class="txt">0.00</div></div>
<div class="box" style="left:538px;top:259px;width:35px"><div class="txt">8.00</div></div>
<div class="box" style="left:589px;top:237px;width:35px"><div class="txt">0.00</div></div>
<div class="box" style="left:589px;top:259px;width:35px"><div class="txt">8.00</div></div>
<div class="box" style="left:640px;top:237px;width:35px"><div class="txt">0.00</div></div>
<div class="box" style="left:640px;top:259px;width:35px"><div class="txt">8.00</div></div>
<div class="box" style="left:691px;top:237px;width:35px"><div class="txt">0.00</div></div>
<div class="box" style="left:691px;top:259px;width:35px"><div class="txt">8.00</div></div>
<div class="box" style="left:742px;top:237px;width:35px"><div class="txt">0.00</div></div>
<div class="box" style="left:742px;top:259px;width:35px"><div class="txt">0.00</div></div>
<div class="box" style="left:799px;top:237px;width:35px"><div class="txt">32.00</div></div>
<svg style="position:absolute;left:393px;top:284px" width="16" height="14" viewBox="0 0 16 14"><path d="M14 3.2 L3 7.4 L14 11.6" stroke="#000" stroke-width="1.3" fill="none"/></svg>
<div style="position:absolute;left:423px;top:283px;width:16px;height:19px;background:#000"></div>
<div class="a" style="left:423px;top:283px;width:16px;text-align:center;color:#fff;font-family:'Liberation Serif',serif;font-weight:bold;font-size:16px;line-height:19px">1</div>
<svg style="position:absolute;left:453px;top:284px" width="16" height="14" viewBox="0 0 16 14"><path d="M2 3.2 L13 7.4 L2 11.6" stroke="#000" stroke-width="1.3" fill="none"/></svg>
<div style="position:absolute;left:16px;top:310px;width:830px;height:1px;background:#a2a2aa"></div>
<div style="position:absolute;left:16px;top:311px;width:830px;height:1px;background:#f0f0f0"></div>
<div class="a" style="left:17px;top:320px">Time Bank Balances (h)</div>
<div class="a" style="left:319px;top:320px">Paycode Subtotals</div>
<div class="lb" style="left:17px;width:300px"></div>
<div class="tb" style="left:25px;top:342px;width:114px;height:84px"><div class="h" style="width:114px">BS0020 Jacobson, Lisa</div>
<div style="top:14px">Sick</div><div style="top:14px;left:auto;right:0">0.00</div>
<div style="top:28px">Stat</div><div style="top:28px;left:auto;right:0">0.00</div>
<div style="top:42px">Overtime</div><div style="top:42px;left:auto;right:0">0.00</div>
<div style="top:56px">Leave</div><div style="top:56px;left:auto;right:0">0.00</div>
</div>
<div class="sb" style="left:297px;top:337px;height:94px"><svg width="13" height="10" viewBox="0 0 13 10" style="position:absolute;left:2px;top:16px"><path d="M1.6 8 L6.5 2.6 L11.4 8" stroke="#c6c6c6" stroke-width="2.3" fill="none"/></svg><svg width="13" height="10" viewBox="0 0 13 10" style="position:absolute;left:2px;top:68px"><path d="M1.6 2 L6.5 7.4 L11.4 2" stroke="#c6c6c6" stroke-width="2.3" fill="none"/></svg></div>
<div class="lb" style="left:319px;width:300px"></div>
<div class="tb" style="left:327px;top:342px;width:127px;height:28px"><div class="h" style="width:127px">BS0020 Jacobson, Lisa</div>
<div style="top:14px">VAC-Vacation Pay</div><div style="top:14px;left:auto;right:0">32.00</div></div>
<div class="sb" style="left:599px;top:337px;height:94px"><svg width="13" height="10" viewBox="0 0 13 10" style="position:absolute;left:2px;top:16px"><path d="M1.6 8 L6.5 2.6 L11.4 8" stroke="#c6c6c6" stroke-width="2.3" fill="none"/></svg><svg width="13" height="10" viewBox="0 0 13 10" style="position:absolute;left:2px;top:68px"><path d="M1.6 2 L6.5 7.4 L11.4 2" stroke="#c6c6c6" stroke-width="2.3" fill="none"/></svg></div>
<div class="btn" style="left:637px;top:339px;width:57px;height:21px;line-height:20px">Save</div>
<div class="btn" style="left:702px;top:339px;width:66px;height:21px;line-height:20px;letter-spacing:0.45px">Delete</div>
<div class="btn" style="left:776px;top:339px;width:69px;height:21px;line-height:20px;letter-spacing:0.45px">Submit</div>
<div class="a" style="left:17px;top:437px"><b style="font-size:11.4px">Payment Method:</b></div><div class="a" style="left:116px;top:437px">All</div>
<div class="a" style="left:140px;top:437px"><b style="font-size:11.4px">Pay Periods:</b></div><div class="a" style="left:211px;top:437px">All</div>
</div></body></html>
